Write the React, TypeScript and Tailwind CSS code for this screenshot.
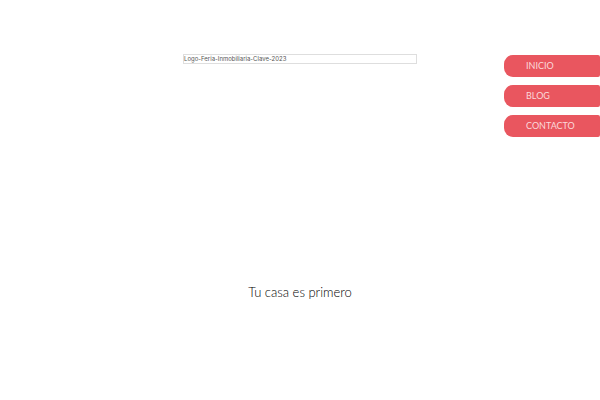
const links = [
  { label: "INICIO", href: "#inicio" },
  { label: "BLOG", href: "#blog" },
  { label: "CONTACTO", href: "#contacto" },
];

function SideNav() {
  return (
    <nav className="flex w-24 flex-col gap-2 justify-self-end">
      {links.map((link) => (
        <a
          key={link.href}
          href={link.href}
          className="flex h-[22px] items-center rounded-l-[9px] rounded-r-xs bg-[#e9565f] pl-[22px] text-[9px] leading-3 text-[#fbd9db] hover:bg-[#d9464f]"
        >
          {link.label}
        </a>
      ))}
    </nav>
  );
}

export default function App() {
  return (
    <div className="min-h-screen bg-white font-['Century_Gothic','Lato',sans-serif]">
      <header className="grid grid-cols-[1fr_39%_1fr] items-start pt-[54px]">
        <a
          href="#inicio"
          className="col-start-2 border border-[#dedede] font-['Century_Gothic','Inter',sans-serif] text-[6px] leading-[8px] text-[#555555]"
        >
          Logo-Feria-Inmobiliaria-Clave-2023
        </a>
        <div className="grid pt-px">
          <SideNav />
        </div>
      </header>

      <main className="px-4 pt-[147px] pb-24 text-center">
        <h1 className="text-[13px] font-light leading-4 text-black">Tu casa es primero</h1>
      </main>
    </div>
  );
}
